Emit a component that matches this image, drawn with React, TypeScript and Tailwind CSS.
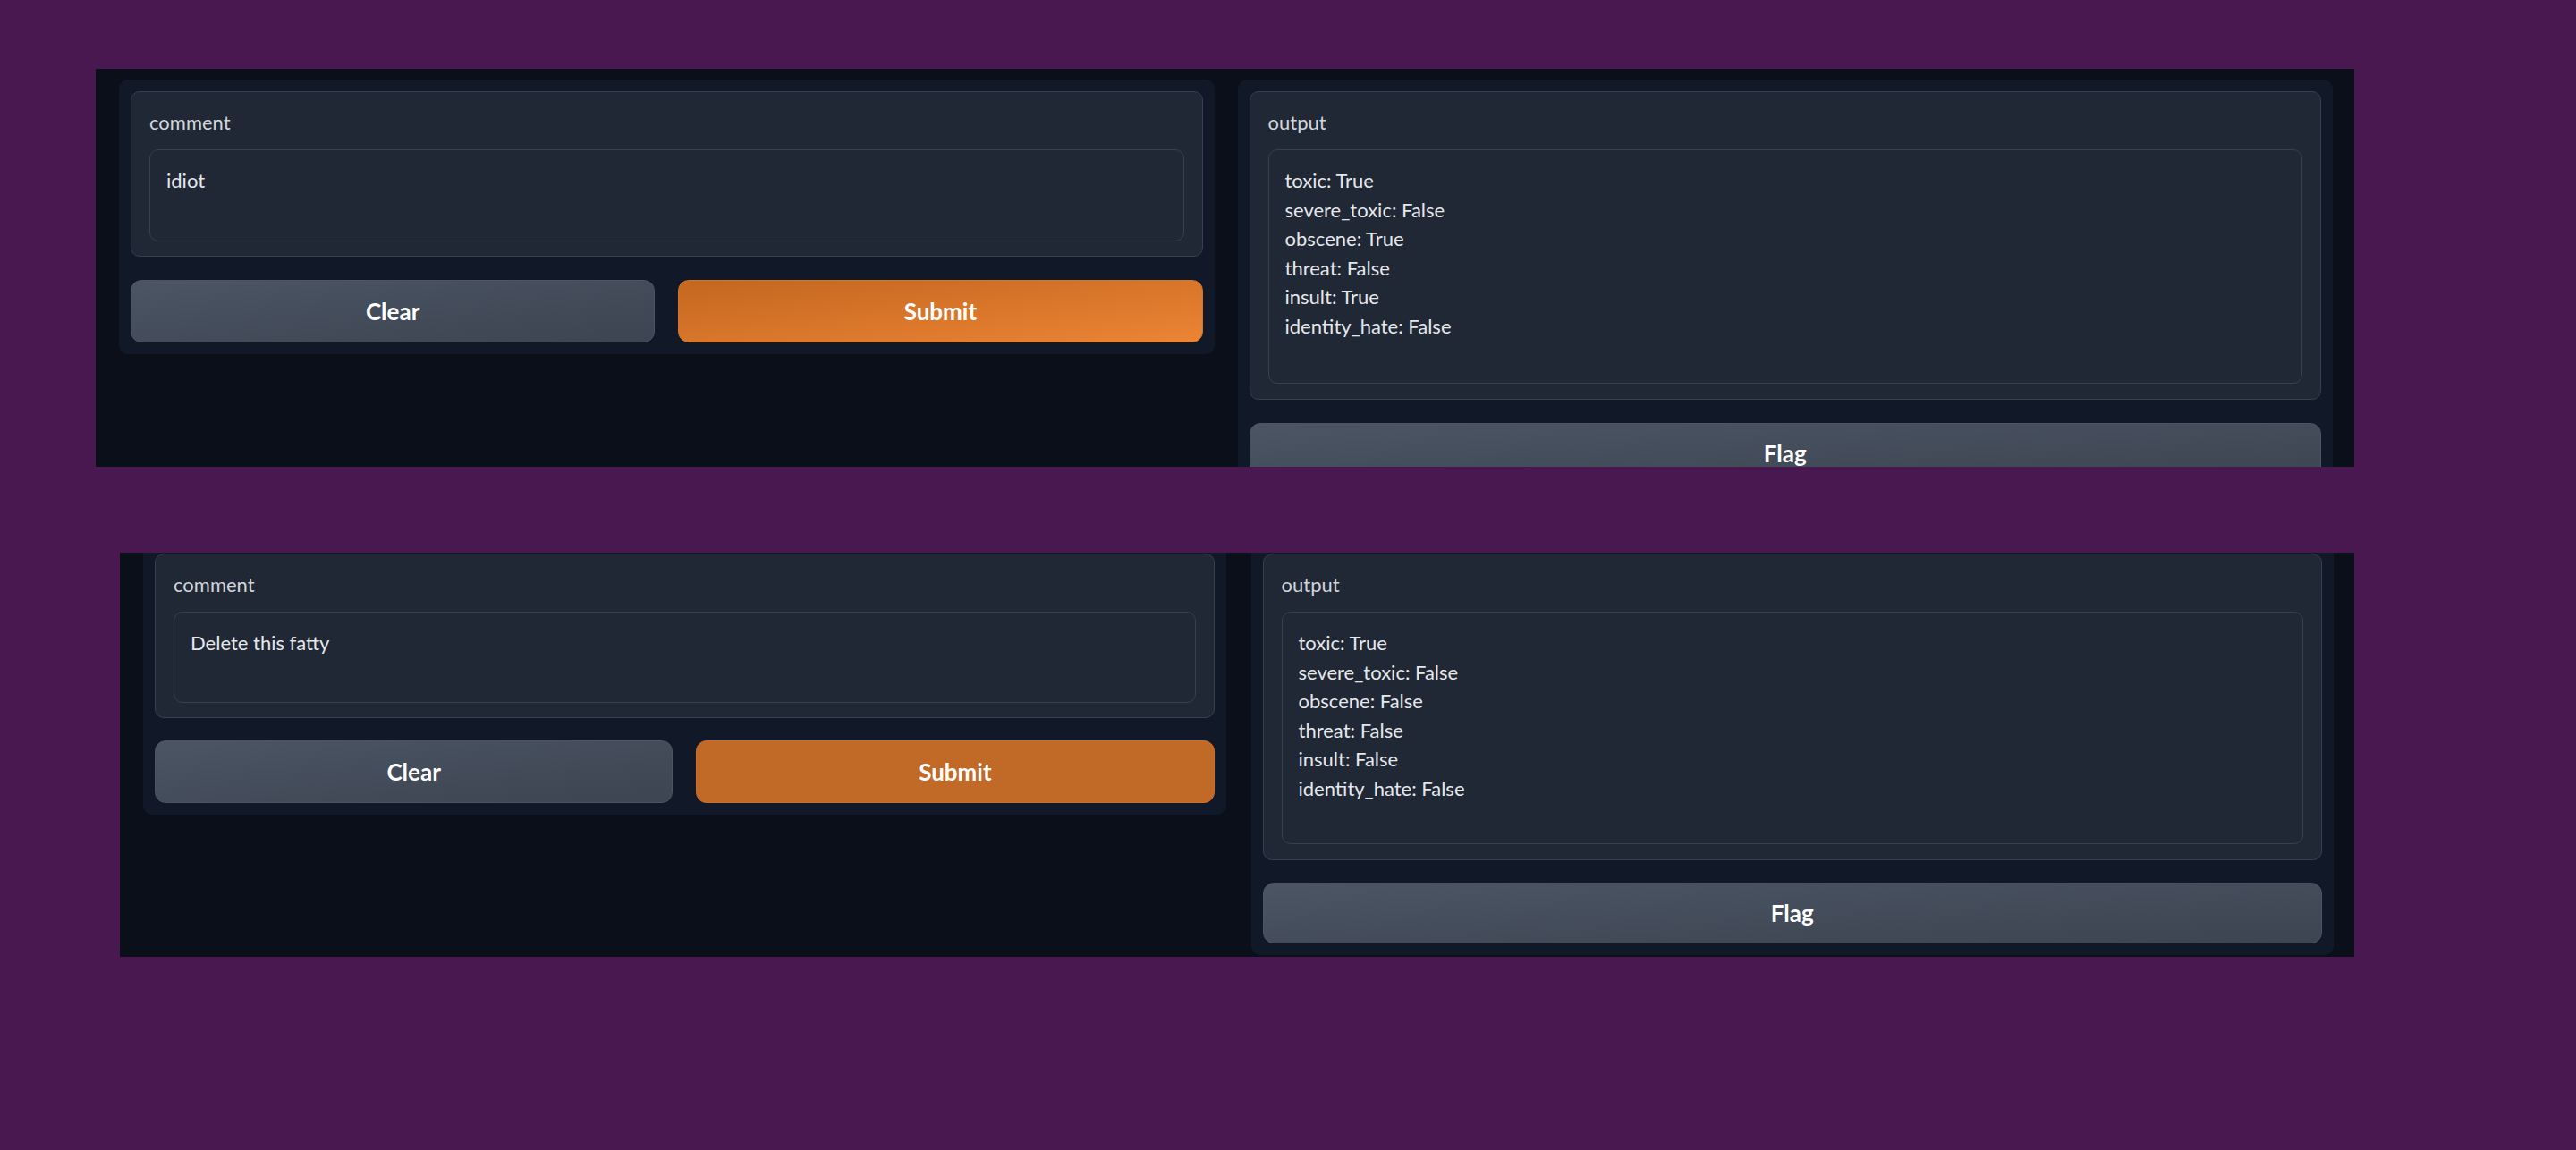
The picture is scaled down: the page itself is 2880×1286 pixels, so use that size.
import React from "react";

const FONT = { fontFamily: '"Lato", "Liberation Sans", sans-serif' };

function Label({ text }: { text: string }) {
  return <div className="text-[22px] leading-[32px] text-[#d1d5db] mb-[14px]">{text}</div>;
}

function Lines({ lines }: { lines: string[] }) {
  return (
    <div className="flex flex-col">
      {lines.map((l, i) => (
        <div key={i} className="leading-[32.6px]">
          {l}
        </div>
      ))}
    </div>
  );
}

function InputPanel({ value, compact }: { value: string; compact?: boolean }) {
  return (
    <div
      className={
        compact
          ? "flex-1 min-w-0 bg-[#111827] rounded-[10px] p-[13px] flex flex-col gap-[25px]"
          : "flex-1 min-w-0 bg-[#111827] rounded-[10px] p-[13px] flex flex-col gap-[26px]"
      }
    >
      <div className="rounded-[10px] border border-[#384050] bg-[#202835] px-[20px] pt-[18px] pb-[16px]">
        <Label text="comment" />
        <div
          className={
            compact
              ? "h-[102px] rounded-[10px] border border-[#384050] bg-[#202835] px-[18px] pt-[18px] text-[22px] text-[#e5e7eb]"
              : "h-[103px] rounded-[10px] border border-[#384050] bg-[#202835] px-[18px] pt-[18px] text-[22px] text-[#e5e7eb]"
          }
        >
          <Lines lines={[value]} />
        </div>
      </div>
      <div className="flex gap-[26px]">
        <button className="flex-1 h-[70px] rounded-[12px] border border-[#4b5563] bg-gradient-to-br from-[#4b5563] to-[#3d4452] text-[26px] font-bold text-white">
          Clear
        </button>
        {compact ? (
          <button className="flex-1 h-[70px] rounded-[12px] border border-[#c96f2a] bg-[#c16a27] text-[26px] font-bold text-white">
            Submit
          </button>
        ) : (
          <button className="flex-1 h-[70px] rounded-[12px] border border-[#d1772f] bg-gradient-to-br from-[#c4671f] to-[#ec8434] text-[26px] font-bold text-white">
            Submit
          </button>
        )}
      </div>
    </div>
  );
}

function OutputPanel({ lines, compact }: { lines: string[]; compact?: boolean }) {
  return (
    <div
      className={
        compact
          ? "flex-1 min-w-0 bg-[#111827] rounded-[10px] p-[13px] flex flex-col gap-[25px]"
          : "flex-1 min-w-0 bg-[#111827] rounded-[10px] p-[13px] flex flex-col gap-[26px]"
      }
    >
      <div className="rounded-[10px] border border-[#384050] bg-[#202835] px-[20px] pt-[18px] pb-[17px]">
        <Label text="output" />
        <div
          className={
            compact
              ? "h-[260px] rounded-[10px] border border-[#384050] bg-[#202835] px-[18px] pt-[18px] text-[22px] text-[#e5e7eb]"
              : "h-[262px] rounded-[10px] border border-[#384050] bg-[#202835] px-[18px] pt-[18px] text-[22px] text-[#e5e7eb]"
          }
        >
          <Lines lines={lines} />
        </div>
      </div>
      <button
        className={
          compact
            ? "w-full h-[68px] rounded-[12px] border border-[#4b5563] bg-gradient-to-br from-[#4b5563] to-[#3d4452] text-[26px] font-bold text-white"
            : "w-full h-[69px] rounded-[12px] border border-[#4b5563] bg-gradient-to-br from-[#4b5563] to-[#3d4452] text-[26px] font-bold text-white"
        }
      >
        Flag
      </button>
    </div>
  );
}

export default function App() {
  return (
    <div className="w-[2880px] h-[1286px] bg-[#491850] flex flex-col overflow-hidden" style={FONT}>
      <div className="ml-[107px] mt-[77px] w-[2525px] h-[445px] shrink-0 overflow-hidden bg-[#0b0f19] flex items-start gap-[26px] pl-[26px] pr-[24px] pt-[12px]">
        <InputPanel value="idiot" />
        <OutputPanel
          lines={[
            "toxic: True",
            "severe_toxic: False",
            "obscene: True",
            "threat: False",
            "insult: True",
            "identity_hate: False",
          ]}
        />
      </div>
      <div className="ml-[134px] mt-[96px] w-[2498px] h-[452px] shrink-0 overflow-hidden bg-[#0b0f19]">
        <div className="flex items-start gap-[28px] pl-[26px] pr-[23px] mt-[-12px]">
          <InputPanel value="Delete this fatty" compact />
          <OutputPanel
            compact
            lines={[
              "toxic: True",
              "severe_toxic: False",
              "obscene: False",
              "threat: False",
              "insult: False",
              "identity_hate: False",
            ]}
          />
        </div>
      </div>
    </div>
  );
}
